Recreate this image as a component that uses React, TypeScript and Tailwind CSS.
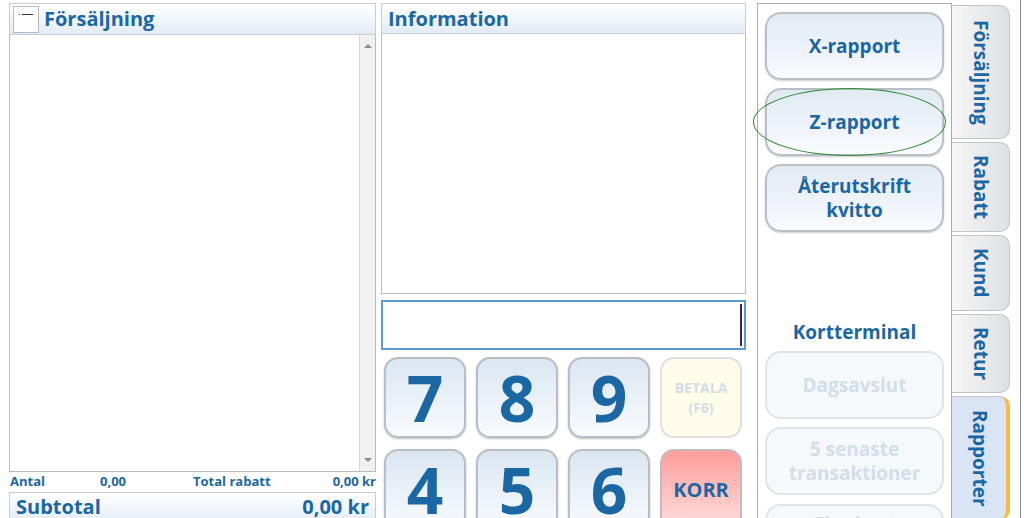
import React from 'react';

const font = { fontFamily: '"Open Sans", "Noto Sans", sans-serif' };

const digitBtn =
  'flex items-center justify-center rounded-[14px] border-2 border-[#b9bec6] bg-gradient-to-b from-[#dbe6f1] to-[#f8fbfe] shadow-[0_1px_2px_rgba(0,0,0,0.25)] text-[#1b67a4] font-bold text-[64px] leading-none';

const sideBtn =
  'shrink-0 w-full h-[68px] flex items-center justify-center text-center rounded-[16px] border-2 border-[#babfc7] bg-gradient-to-b from-[#e1eaf4] to-[#f9fbfe] shadow-[0_1px_2px_rgba(0,0,0,0.2)] text-[#1b67a4] font-bold text-[19px] leading-[24px]';

const sideBtnOff =
  'shrink-0 w-full h-[68px] flex items-center justify-center text-center rounded-[16px] border-2 border-[#dfe3e8] bg-[#f6f9fc] text-[#d3dee9] font-bold text-[19px] leading-[24px]';

const tabs = [
  { label: 'Försäljning', h: 'h-[134px]' },
  { label: 'Rabatt', h: 'h-[90px]' },
  { label: 'Kund', h: 'h-[76px]' },
  { label: 'Retur', h: 'h-[79px]' },
];

const App: React.FC = () => {
  return (
    <div className="w-[1024px] h-[518px] overflow-hidden bg-white flex" style={font}>
      {/* Sales list */}
      <div className="w-[367px] ml-[9px] pt-[3px] flex flex-col">
        <div className="shrink-0 h-[32px] flex items-center gap-[5px] pl-[3px] border border-[#c9ccd1] bg-gradient-to-b from-white to-[#e2ecf6]">
          <div className="w-[26px] h-[27px] border border-[#b8bcc2] bg-white flex items-start justify-center pt-[7px] gap-[2px]">
            <span className="w-[1px] h-[1px] bg-[#555]"></span>
            <span className="w-[11px] h-[1px] bg-[#333]"></span>
          </div>
          <span className="text-[20px] font-bold text-[#1b67a4] leading-none">Försäljning</span>
        </div>
        <div className="shrink-0 h-[437px] flex border border-[#b8bcc2] border-t-0">
          <div className="flex-1"></div>
          <div className="w-[16px] bg-[#f0f0f0] border-l border-[#d6d6d6] flex flex-col items-center justify-between py-[9px]">
            <span className="w-0 h-0 border-l-[4px] border-r-[4px] border-b-[4px] border-l-transparent border-r-transparent border-b-[#8a8a8a]"></span>
            <span className="w-0 h-0 border-l-[4px] border-r-[4px] border-t-[4px] border-l-transparent border-r-transparent border-t-[#8a8a8a]"></span>
          </div>
        </div>
        <div className="shrink-0 h-[20px] flex items-center text-[13px] font-bold text-[#1b67a4] pl-[1px]">
          <span className="w-[90px]">Antal</span>
          <span className="w-[93px]">0,00</span>
          <span className="flex-1">Total rabatt</span>
          <span>0,00 kr</span>
        </div>
        <div className="shrink-0 h-[30px] flex items-center justify-between px-[6px] border border-[#c9ccd1] bg-gradient-to-b from-white to-[#e4edf6] text-[20px] font-bold text-[#1b67a4]">
          <span>Subtotal</span>
          <span>0,00 kr</span>
        </div>
      </div>

      {/* Information + keypad */}
      <div className="w-[365px] ml-[5px] pt-[3px] flex flex-col">
        <div className="shrink-0 h-[31px] flex items-center pl-[6px] border border-[#c9ccd1] bg-gradient-to-b from-white to-[#e2ecf6]">
          <span className="text-[20px] font-bold text-[#1b67a4] leading-none">Information</span>
        </div>
        <div className="shrink-0 h-[260px] border border-[#b8bcc2] border-t-0"></div>
        <div className="shrink-0 mt-[6px] h-[50px] border-2 border-[#5b9bd8] flex justify-end pr-[2px] py-[2px]">
          <span className="w-[2px] h-full bg-[#333]"></span>
        </div>
        <div className="shrink-0 mt-[7px] ml-[3px] mr-[4px] grid grid-cols-4 gap-x-[10px] gap-y-[11px] auto-rows-[81px]">
          <button className={digitBtn}>7</button>
          <button className={digitBtn}>8</button>
          <button className={digitBtn}>9</button>
          <button className="flex flex-col items-center justify-center rounded-[14px] border-2 border-[#dcdfe3] bg-[#fffde9] text-[#d2dde8] font-bold text-[14px] leading-[20px]">
            <span>BETALA</span>
            <span>(F6)</span>
          </button>
          <button className={digitBtn}>4</button>
          <button className={digitBtn}>5</button>
          <button className={digitBtn}>6</button>
          <button className="flex items-center justify-center rounded-[14px] border-2 border-[#c7b9bb] bg-gradient-to-b from-[#ff9d9d] to-[#ffdede] text-[#1b67a4] font-bold text-[20px]">
            KORR
          </button>
        </div>
      </div>

      {/* Report buttons */}
      <div className="w-[195px] ml-[11px] mt-[3px] h-[540px] shrink-0 border border-[#a9adb3] px-[7px] pt-[8px] flex flex-col">
        <button className={sideBtn}>X-rapport</button>
        <div className="relative shrink-0 mt-[8px]">
          <button className={sideBtn}>Z-rapport</button>
          <div className="absolute left-[-12px] right-[-2px] top-[0px] bottom-[0px] rounded-[50%] border-[1.5px] border-[#2f8a2f]"></div>
        </div>
        <button className={sideBtn + ' mt-[8px]'}>
          <span>Återutskrift<br />kvitto</span>
        </button>
        <div className="shrink-0 mt-[85px] h-[30px] flex items-center justify-center text-[19px] font-bold text-[#1b67a4]">Kortterminal</div>
        <button className={sideBtnOff + ' mt-[4px]'}>Dagsavslut</button>
        <button className={sideBtnOff + ' mt-[8px]'}>
          <span>5 senaste<br />transaktioner</span>
        </button>
        <button className={sideBtnOff + ' mt-[9px] items-start pt-[6px]'}>Fler kort</button>
      </div>

      {/* Tabs */}
      <div className="w-[58px] shrink-0 pt-[5px] flex flex-col gap-[3px]">
        {tabs.map((t) => (
          <div
            key={t.label}
            className={`${t.h} shrink-0 rounded-r-[10px] border border-l-0 border-[#c2c5ca] bg-gradient-to-r from-[#f6f6f6] to-[#dfe0e2] flex items-center justify-center`}
          >
            <span className="[writing-mode:vertical-rl] text-[19px] font-bold text-[#1b67a4] leading-none">{t.label}</span>
          </div>
        ))}
        <div className="h-[124px] shrink-0 rounded-r-[10px] border border-l-0 border-r-[4px] border-[#c2c5ca] border-r-[#f6bb45] bg-[#d9e5f5] flex items-center justify-center">
          <span className="[writing-mode:vertical-rl] text-[19px] font-bold text-[#1b67a4] leading-none">Rapporter</span>
        </div>
      </div>

      <div className="ml-[10px] w-[1px] h-full bg-[#8c8c8c]"></div>
    </div>
  );
};

export default App;
